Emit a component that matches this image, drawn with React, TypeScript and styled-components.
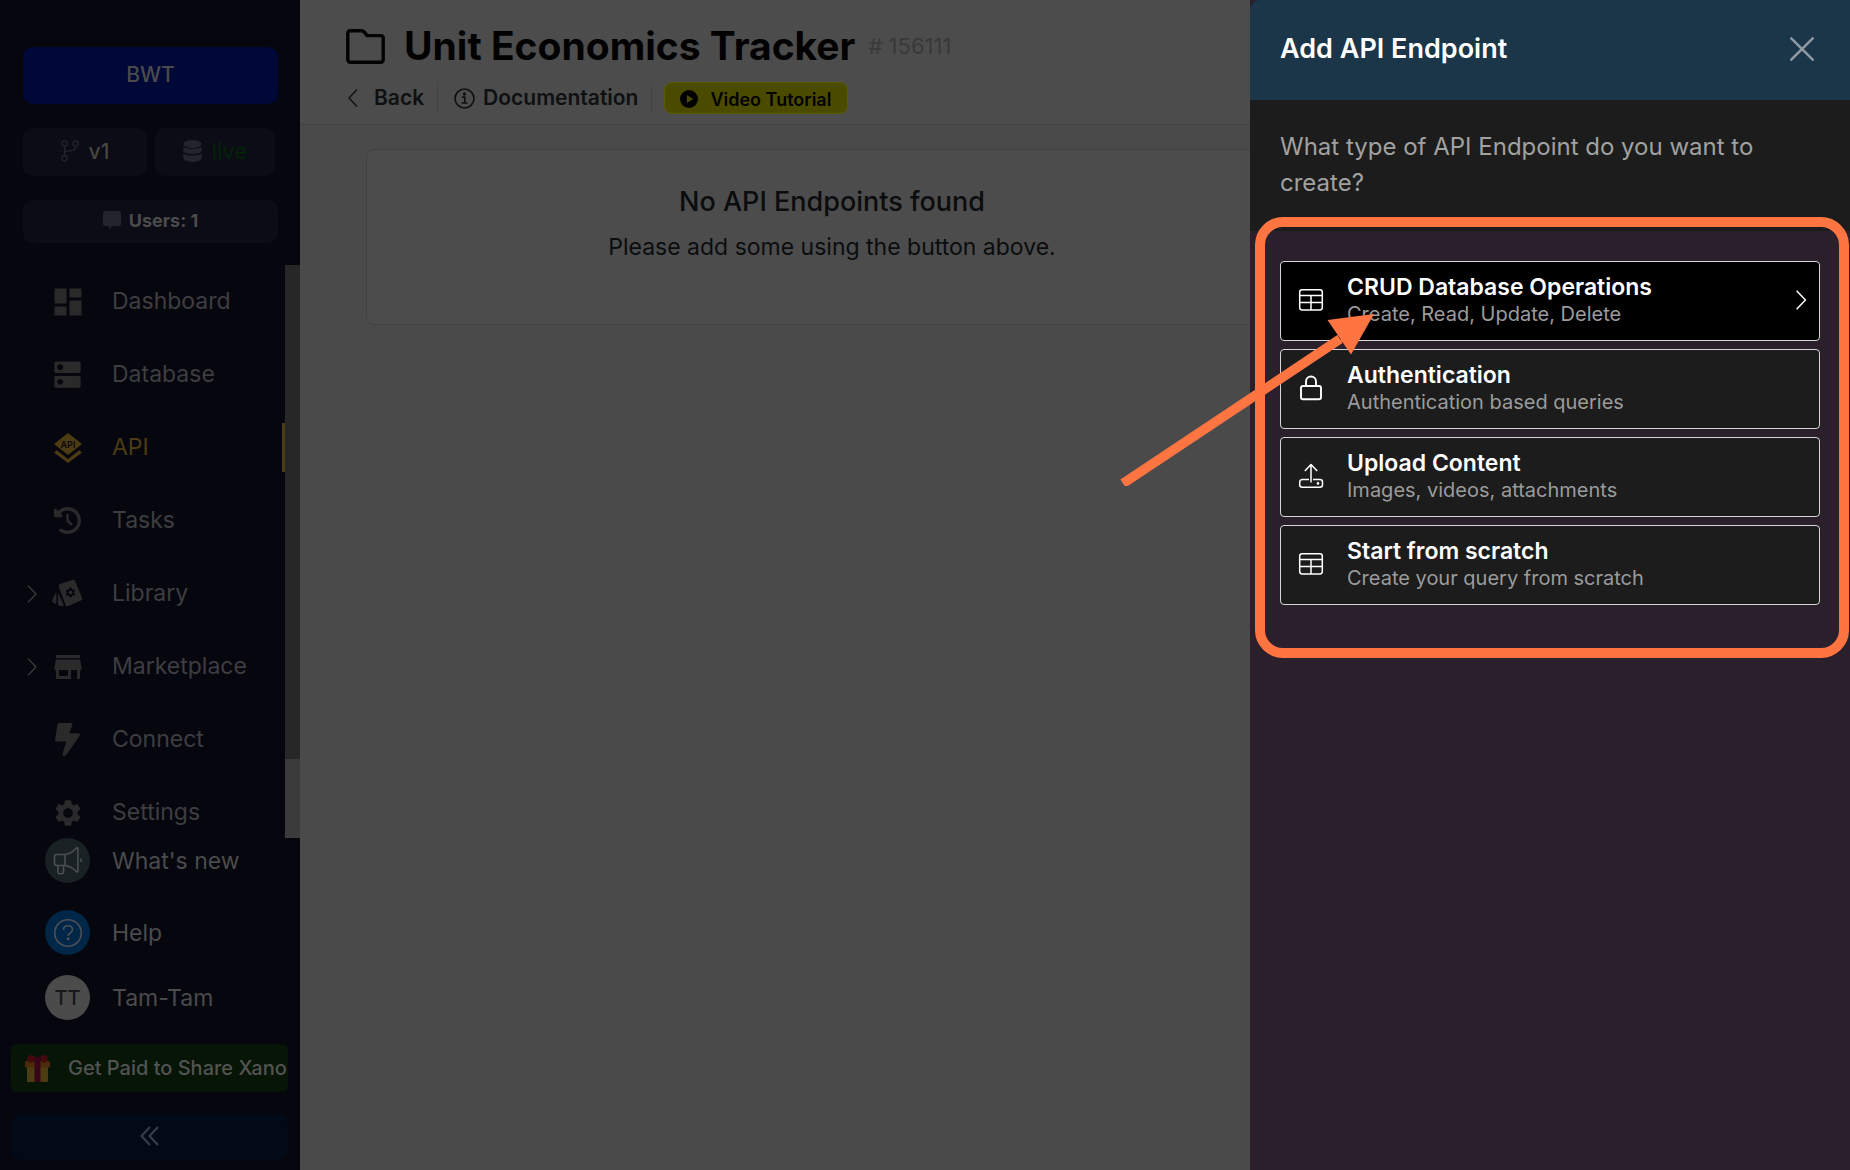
import React from 'react';
import styled, { createGlobalStyle } from 'styled-components';
import { MdDashboard, MdDns, MdSettings, MdStore } from 'react-icons/md';
import { FaClockRotateLeft } from 'react-icons/fa6';

const color = {
  sidebar: '#06060f',
  sidebarButton: '#0b0c16',
  navText: '#3e3e40',
  navIcon: '#2a2a2b',
  muted: '#4b4b4c',
  gold: '#4c3b13',
  page: '#4a4a4a',
  surface: '#4c4c4c',
  line: '#414141',
  ink: '#0b0c0e',
  drawer: '#2b1f2c',
  drawerHeader: '#1b3549',
  dark: '#1c1c1c',
  accent: '#ff7541',
};

const GlobalStyle = createGlobalStyle`
  *, *::before, *::after { box-sizing: border-box; }
  body {
    margin: 0;
    background: ${color.page};
    font-family: Inter, "Liberation Sans", sans-serif;
    overflow: hidden;
  }
  button { font: inherit; border: 0; padding: 0; cursor: pointer; }
  h1, h2, p { margin: 0; }
  svg { display: block; flex: none; }
`;

const Shell = styled.div`
  display: flex;
  height: 100vh;
`;

const Sidebar = styled.aside`
  flex: none;
  display: flex;
  flex-direction: column;
  width: 300px;
  background: ${color.sidebar};
`;

const Workspace = styled.div`
  display: flex;
  flex-direction: column;
  gap: 24px;
  padding: 47px 22px 22px 23px;
`;

const BranchRow = styled.div`
  display: grid;
  grid-template-columns: 124px 120px;
  gap: 8px;
`;

const SideButton = styled.button<{ $height: number; $bg?: string; $fg?: string; $size?: number; $weight?: number; $gap?: number }>`
  display: flex;
  align-items: center;
  justify-content: center;
  gap: ${(p) => p.$gap ?? 10}px;
  height: ${(p) => p.$height}px;
  padding-bottom: 2px;
  border-radius: 10px;
  background: ${(p) => p.$bg ?? color.sidebarButton};
  color: ${(p) => p.$fg ?? color.muted};
  font-size: ${(p) => p.$size ?? 20}px;
  font-weight: ${(p) => p.$weight ?? 500};
  svg { color: #24242c; }
`;

const NavArea = styled.div`
  flex: 1;
  min-height: 0;
  display: flex;
  overflow: hidden;
`;

const NavList = styled.nav`
  flex: 1;
  display: flex;
  flex-direction: column;
`;

const NavItem = styled.a<{ $active?: boolean }>`
  flex: none;
  display: grid;
  grid-template-columns: 22px 23px 45px 1fr;
  align-items: center;
  height: 49px;
  margin: 12px 0;
  border-right: 3px solid ${(p) => (p.$active ? color.gold : 'transparent')};
  color: ${(p) => (p.$active ? color.gold : color.navText)};
  font-size: 23px;
  line-height: 28px;
  text-decoration: none;
`;

const NavIcon = styled.span<{ $active?: boolean }>`
  grid-column: 3;
  display: flex;
  justify-content: center;
  color: ${(p) => (p.$active ? color.gold : color.navIcon)};
`;

const NavChevron = styled.span`
  grid-column: 1 / 3;
  padding-left: 27px;
  color: ${color.navText};
`;

const NavLabel = styled.span`
  grid-column: 4;
  padding-left: 22px;
  padding-bottom: 1px;
`;

const ScrollTrack = styled.div`
  display: flex;
  flex-direction: column;
  justify-content: flex-end;
  width: 15px;
  background: #272727;
`;

const ScrollThumb = styled.div`
  height: 79px;
  background: #3b3b3b;
`;

const SideFooter = styled.div`
  display: flex;
  flex-direction: column;
  padding-bottom: 10px;
`;

const FooterLinks = styled.div`
  display: grid;
  grid-template-rows: 72px 65px 45px;
`;

const FooterLink = styled.a`
  display: flex;
  align-items: center;
  gap: 22px;
  height: 45px;
  padding-left: 45px;
  color: ${color.muted};
  font-size: 23px;
  line-height: 28px;
  text-decoration: none;
`;

const Round = styled.span<{ $bg: string }>`
  display: flex;
  align-items: center;
  justify-content: center;
  width: 45px;
  height: 45px;
  border-radius: 50%;
  background: ${(p) => p.$bg};
  color: #17181a;
  font-size: 20px;
  font-weight: 500;
`;

const FooterButtons = styled.div`
  display: flex;
  flex-direction: column;
  gap: 22px;
  padding: 24px 12px 0 11px;
`;

const ShareButton = styled.button`
  display: flex;
  align-items: center;
  gap: 18px;
  height: 48px;
  padding-left: 14px;
  border-radius: 6px;
  background: #061505;
  color: #525352;
  font-size: 20px;
  font-weight: 500;
  white-space: nowrap;
`;

const Main = styled.main`
  flex: 1;
  min-width: 0;
  background: ${color.page};
`;

const PageHeader = styled.header`
  display: flex;
  flex-direction: column;
  gap: 10px;
  height: 125px;
  padding: 22px 46px 0;
  border-bottom: 1px solid ${color.line};
  background: ${color.surface};
`;

const TitleRow = styled.div`
  display: flex;
  align-items: center;
  gap: 19px;
  height: 48px;
`;

const PageTitle = styled.h1`
  color: #020203;
  font-size: 39px;
  font-weight: 700;
  line-height: 48px;
`;

const PageId = styled.span`
  margin-left: -6px;
  color: #393939;
  font-size: 22px;
`;

const ActionRow = styled.div`
  display: flex;
  align-items: center;
  height: 36px;
`;

const HeaderLink = styled.a<{ $gap: number }>`
  display: flex;
  align-items: center;
  gap: ${(p) => p.$gap}px;
  padding-right: 13px;
  border-right: 1px solid #434343;
  color: #0e1012;
  font-size: 21px;
  font-weight: 600;
  line-height: 30px;
  text-decoration: none;
  & + & { padding-left: 16px; }
`;

const VideoButton = styled.button`
  display: flex;
  align-items: center;
  gap: 12px;
  height: 32px;
  margin-left: 12px;
  padding: 2px 16px 0 15px;
  border: 1px solid #5a5a00;
  border-radius: 8px;
  background: #4b4b00;
  color: #020200;
  font-size: 18px;
  font-weight: 600;
`;

const Content = styled.section`
  padding: 24px 552px 0 66px;
`;

const EmptyCard = styled.div`
  display: flex;
  flex-direction: column;
  align-items: center;
  gap: 12px;
  height: 176px;
  padding-top: 35px;
  border: 1px solid ${color.line};
  border-radius: 8px;
  background: ${color.surface};
  color: ${color.ink};
`;

const EmptyTitle = styled.h2`
  font-size: 27px;
  font-weight: 500;
  line-height: 34px;
`;

const EmptyText = styled.p`
  font-size: 23px;
  line-height: 32px;
`;

const Drawer = styled.section`
  position: fixed;
  top: 0;
  right: 0;
  bottom: 0;
  width: 600px;
  background: ${color.drawer};
`;

const DrawerHeader = styled.header`
  display: flex;
  align-items: center;
  justify-content: space-between;
  height: 100px;
  padding: 0 36px 2px 30px;
  border-radius: 10px 0 0 0;
  background: ${color.drawerHeader};
`;

const DrawerTitle = styled.h2`
  color: #fff;
  font-size: 27px;
  font-weight: 600;
  line-height: 32px;
`;

const CloseButton = styled.button`
  background: none;
  color: #8e9aa4;
`;

const Question = styled.p`
  padding: 29px 60px 30px 30px;
  background: ${color.dark};
  color: #a1a1a1;
  font-size: 24px;
  line-height: 36px;
`;

const Options = styled.div`
  position: relative;
  display: flex;
  flex-direction: column;
  gap: 8px;
  padding: 30px;
`;

const Option = styled.button<{ $active?: boolean }>`
  display: grid;
  grid-template-columns: 26px 1fr 12px;
  align-items: center;
  column-gap: 23px;
  height: 80px;
  padding: 0 12px 2px 17px;
  border: 1px solid #d6d6d6;
  border-radius: 4px;
  background: ${(p) => (p.$active ? '#000' : color.dark)};
  color: #fff;
  text-align: left;
`;

const OptionText = styled.span`
  display: flex;
  flex-direction: column;
`;

const OptionTitle = styled.span`
  color: #fff;
  font-size: 23px;
  font-weight: 600;
  line-height: 28px;
`;

const OptionHint = styled.span`
  color: #9b9b9b;
  font-size: 20px;
  line-height: 26px;
`;

const Highlight = styled.div`
  position: absolute;
  top: -14px;
  right: 1px;
  bottom: -23px;
  left: 5px;
  border: 10px solid ${color.accent};
  border-radius: 28px;
  pointer-events: none;
`;

const Pointer = styled.svg`
  position: absolute;
  top: 79px;
  left: -134px;
  pointer-events: none;
`;

const ApiIcon = () => (
  <svg width="28" height="30" viewBox="0 0 28 30" fill="currentColor">
    <path d="M14 0 28 11 14 22 0 11Z" />
    <path d="M0 19.500 2.700 17.300 14 26 25.300 17.300 28 19.500 14 30Z" />
    <text x="14" y="14.500" fill={color.sidebar} fontSize="9" fontWeight="600" textAnchor="middle">API</text>
  </svg>
);

const LibraryIcon = () => (
  <svg width="31" height="27" viewBox="0 0 31 27" fill={color.navIcon} stroke={color.navIcon} strokeLinejoin="round">
    <path d="M8.700 6 21.300 1.800 28.200 18.700 15.500 24.200Z" strokeWidth="4" />
    <path d="M6.500 14.500 11.500 25.500H7.500Q6.500 25.500 6.500 24.500Z" strokeWidth=".8" />
    <path d="M4 13V23.500Q0 22.500 .5 20.500Z" strokeWidth=".8" />
    <g stroke="none"><MdSettings x={12.500} y={6.500} size={12} color={color.sidebar} /></g>
  </svg>
);

const BoltIcon = () => (
  <svg width="25" height="33" viewBox="0 0 320 512" preserveAspectRatio="none" fill="currentColor">
    <path d="M296 160H180.600l42.600-129.800C227.200 15 215.700 0 200 0H56C44 0 33.800 8.900 32.200 20.800l-32 240C-1.700 275.200 9.500 288 24 288h118.700L96.600 482.500c-3.600 15.200 8 29.500 23.300 29.500 8.400 0 16.400-4.400 20.800-12l176-304c9.300-15.900-2.200-36-20.700-36z" />
  </svg>
);

const Chevron = ({ left = false, width = 10, height = 18, stroke = 1.3 }) => (
  <svg width={width} height={height} viewBox="0 0 10 18" fill="none" stroke="currentColor" strokeWidth={stroke}>
    <path d={left ? 'M9 .6 1 9l8 8.400' : 'M1 .6 9 9l-8 8.400'} />
  </svg>
);

const BranchIcon = () => (
  <svg width="18" height="22" viewBox="0 0 18 22" fill="none" stroke="currentColor" strokeWidth="1.300">
    <circle cx="3.500" cy="3.500" r="2.600" />
    <circle cx="14.500" cy="3.500" r="2.600" />
    <circle cx="3.500" cy="18.300" r="2.600" />
    <path d="M3.500 6.100v9.600M3.500 13.500c0-2 1-2.700 3-2.700h3.500c3 0 4.500-1.500 4.500-4.700" />
  </svg>
);

const StackIcon = () => (
  <svg width="19" height="22" viewBox="0 0 19 22" fill="currentColor">
    <ellipse cx="9.500" cy="4" rx="9.200" ry="4" />
    <path d="M.3 6.800c2 2.600 16.400 2.600 18.400 0v4.400c-1 3.400-17.400 3.400-18.400 0Z" />
    <path d="M.3 13.600c2 2.600 16.400 2.600 18.400 0V18c-1 5.200-17.400 5.200-18.400 0Z" />
  </svg>
);

const ChatIcon = () => (
  <svg width="18" height="19" viewBox="0 0 18 19" fill="currentColor">
    <path d="M2.500 0h13A2.500 2.500 0 0 1 18 2.500v10a2.500 2.500 0 0 1-2.500 2.500H10l-4 3.500V15H2.500A2.500 2.500 0 0 1 0 12.500v-10A2.500 2.500 0 0 1 2.500 0Z" />
  </svg>
);

const MegaphoneIcon = () => (
  <svg width="30" height="30" viewBox="0 0 30 30" fill="none" stroke="#4b4f51" strokeWidth="1.600" strokeLinejoin="round">
    <path d="M12 8.500H4A2.500 2.500 0 0 0 1.500 11v6A2.500 2.500 0 0 0 4 19.500h8ZM12 8.500c5-.8 8.500-3 11.500-6.500.6-.6 1.400-.4 1.400.6v22.600c0 1-.8 1.200-1.400.6-3-3.500-6.500-5.500-11.500-6.300" />
    <path d="M5 19.500V26c0 1 .6 1.700 1.600 1.700h2.300c1 0 1.600-.7 1.600-1.700v-6.500M28 12.500v3.500" />
  </svg>
);

const HelpIcon = () => (
  <svg width="30" height="30" viewBox="0 0 30 30" fill="none" stroke="#4a5158" strokeWidth="1.600">
    <circle cx="15" cy="15" r="13.300" />
    <path d="M10.500 12c0-2.500 1.800-4.200 4.500-4.200s4.500 1.600 4.500 3.900c0 3.200-4.300 3.300-4.300 6.300" />
    <circle cx="15.200" cy="20.800" r=".7" />
  </svg>
);

const GiftIcon = () => (
  <svg width="25" height="27" viewBox="0 0 25 27">
    <rect x="2" y="10" width="21" height="17" rx="1" fill="#4c3c12" />
    <rect x="0" y="6" width="25" height="6.500" rx="1.500" fill="#4a2c0c" />
    <circle cx="6" cy="3.800" r="3.800" fill="#43090d" />
    <circle cx="19" cy="3.800" r="3.800" fill="#43090d" />
    <path d="M9.500 3c0-2 6-2 6 0v24h-6Z" fill="#38041a" />
  </svg>
);

const CollapseIcon = () => (
  <svg width="19" height="20" viewBox="0 0 19 20" fill="none" stroke="#3a3e46" strokeWidth="2">
    <path d="M10 1 1.500 10l8.500 9M18 1 9.500 10l8.500 9" />
  </svg>
);

const FolderIcon = () => (
  <svg width="39" height="35" viewBox="0 0 39 35" fill="none" stroke="#020203" strokeWidth="3.400" strokeLinejoin="round">
    <path d="M1.800 4.200a2.400 2.400 0 0 1 2.400-2.400h11.600a3 3 0 0 1 2.200 1l3.200 3.800h13.600a2.400 2.400 0 0 1 2.400 2.400v21.800a2.400 2.400 0 0 1-2.400 2.400H4.200a2.400 2.400 0 0 1-2.400-2.400Z" />
  </svg>
);

const InfoIcon = () => (
  <svg width="21" height="21" viewBox="0 0 21 21" fill="none" stroke="currentColor" strokeWidth="1.700">
    <circle cx="10.500" cy="10.500" r="9.500" />
    <path d="M8 9.200h2.800v5.600M7.500 15h6" />
    <circle cx="10.500" cy="6" r=".8" fill="currentColor" />
  </svg>
);

const PlayIcon = () => (
  <svg width="18" height="18" viewBox="0 0 18 18">
    <circle cx="9" cy="9" r="9" fill="#020200" />
    <path d="M6.800 5v8l6.400-4Z" fill="#4b4b00" />
  </svg>
);

const CloseIcon = () => (
  <svg width="24" height="24" viewBox="0 0 24 24" stroke="currentColor" strokeWidth="2.500" strokeLinecap="round">
    <path d="m1.300 1.300 21.400 21.400M22.700 1.300 1.300 22.700" />
  </svg>
);

const optionIcon = { width: 26, height: 26, viewBox: '0 0 26 26', fill: 'none', stroke: 'currentColor', strokeLinejoin: 'round' as const };

const TableIcon = () => (
  <svg {...optionIcon} strokeWidth="1.500">
    <rect x="1.700" y="2.700" width="22.600" height="20.300" rx="2.400" />
    <path d="M1.700 8.500h22.600M1.700 15.500h22.600M13 8.500v14.500" />
  </svg>
);

const LockIcon = () => (
  <svg {...optionIcon} strokeWidth="1.900">
    <rect x="3" y="11" width="20" height="13.300" rx="2" />
    <path d="M8 11V6.500a5 5 0 0 1 10 0V11" />
  </svg>
);

const UploadIcon = () => (
  <svg {...optionIcon} strokeWidth="1.500">
    <path d="M13 19.500V1.500M6.800 8 13 1.500 19.200 8" />
    <path d="M11 16.500H4.200a2.500 2.500 0 0 0-2.500 2.500v2.700a2.500 2.500 0 0 0 2.500 2.500H22a2.500 2.500 0 0 0 2.500-2.500V19a2.500 2.500 0 0 0-2.500-2.500h-7" />
    <circle cx="20" cy="20.400" r=".6" fill="currentColor" />
  </svg>
);

const navItems = [
  { label: 'Dashboard', icon: <MdDashboard size={36} /> },
  { label: 'Database', icon: <MdDns size={35} /> },
  { label: 'API', icon: <ApiIcon />, active: true },
  { label: 'Tasks', icon: <FaClockRotateLeft size={27} /> },
  { label: 'Library', icon: <LibraryIcon />, nested: true },
  { label: 'Marketplace', icon: <MdStore size={36} />, nested: true },
  { label: 'Connect', icon: <BoltIcon /> },
  { label: 'Settings', icon: <MdSettings size={32} /> },
];

const options = [
  { title: 'CRUD Database Operations', hint: 'Create, Read, Update, Delete', icon: <TableIcon />, active: true },
  { title: 'Authentication', hint: 'Authentication based queries', icon: <LockIcon /> },
  { title: 'Upload Content', hint: 'Images, videos, attachments', icon: <UploadIcon /> },
  { title: 'Start from scratch', hint: 'Create your query from scratch', icon: <TableIcon /> },
];

export default function App() {
  return (
    <>
      <GlobalStyle />
      <Shell>
        <Sidebar>
          <Workspace>
            <SideButton $height={57} $bg="#000838" $size={21}>BWT</SideButton>
            <BranchRow>
              <SideButton $height={48} $fg="#48463c" $size={21}><BranchIcon />v1</SideButton>
              <SideButton $height={48} $fg="#032206" $size={22} $weight={400}><StackIcon />live</SideButton>
            </BranchRow>
            <SideButton $height={43} $size={18} $weight={700} $gap={8}><ChatIcon />Users: 1</SideButton>
          </Workspace>
          <NavArea>
            <NavList>
              {navItems.map((item) => (
                <NavItem key={item.label} href="#" $active={item.active}>
                  {item.nested && <NavChevron><Chevron /></NavChevron>}
                  <NavIcon $active={item.active}>{item.icon}</NavIcon>
                  <NavLabel>{item.label}</NavLabel>
                </NavItem>
              ))}
            </NavList>
            <ScrollTrack><ScrollThumb /></ScrollTrack>
          </NavArea>
          <SideFooter>
            <FooterLinks>
              <FooterLink href="#"><Round $bg="#1a2124"><MegaphoneIcon /></Round>What's new</FooterLink>
              <FooterLink href="#"><Round $bg="#002747"><HelpIcon /></Round>Help</FooterLink>
              <FooterLink href="#"><Round $bg="#4b4b4b">TT</Round>Tam-Tam</FooterLink>
            </FooterLinks>
            <FooterButtons>
              <ShareButton><GiftIcon />Get Paid to Share Xano</ShareButton>
              <SideButton $height={46} $bg="#030a17" aria-label="Collapse menu"><CollapseIcon /></SideButton>
            </FooterButtons>
          </SideFooter>
        </Sidebar>
        <Main>
          <PageHeader>
            <TitleRow>
              <FolderIcon />
              <PageTitle>Unit Economics Tracker</PageTitle>
              <PageId># 156111</PageId>
            </TitleRow>
            <ActionRow>
              <HeaderLink href="#" $gap={14}><Chevron left width={14} stroke={1.4} />Back</HeaderLink>
              <HeaderLink href="#" $gap={8}><InfoIcon />Documentation</HeaderLink>
              <VideoButton><PlayIcon />Video Tutorial</VideoButton>
            </ActionRow>
          </PageHeader>
          <Content>
            <EmptyCard>
              <EmptyTitle>No API Endpoints found</EmptyTitle>
              <EmptyText>Please add some using the button above.</EmptyText>
            </EmptyCard>
          </Content>
        </Main>
      </Shell>
      <Drawer role="dialog" aria-label="Add API Endpoint">
        <DrawerHeader>
          <DrawerTitle>Add API Endpoint</DrawerTitle>
          <CloseButton aria-label="Close"><CloseIcon /></CloseButton>
        </DrawerHeader>
        <Question>What type of API Endpoint do you want to create?</Question>
        <Options>
          {options.map((option) => (
            <Option key={option.title} $active={option.active}>
              {option.icon}
              <OptionText>
                <OptionTitle>{option.title}</OptionTitle>
                <OptionHint>{option.hint}</OptionHint>
              </OptionText>
              {option.active && <Chevron width={12} height={20} />}
            </Option>
          ))}
          <Highlight />
          <Pointer width="262" height="176" viewBox="0 0 262 176" fill={color.accent}>
            <path d="M7 173.500 224 29" stroke={color.accent} strokeWidth="9.500" />
            <path d="M258 4 211.500 10 235 44.500Z" />
          </Pointer>
        </Options>
      </Drawer>
    </>
  );
}
